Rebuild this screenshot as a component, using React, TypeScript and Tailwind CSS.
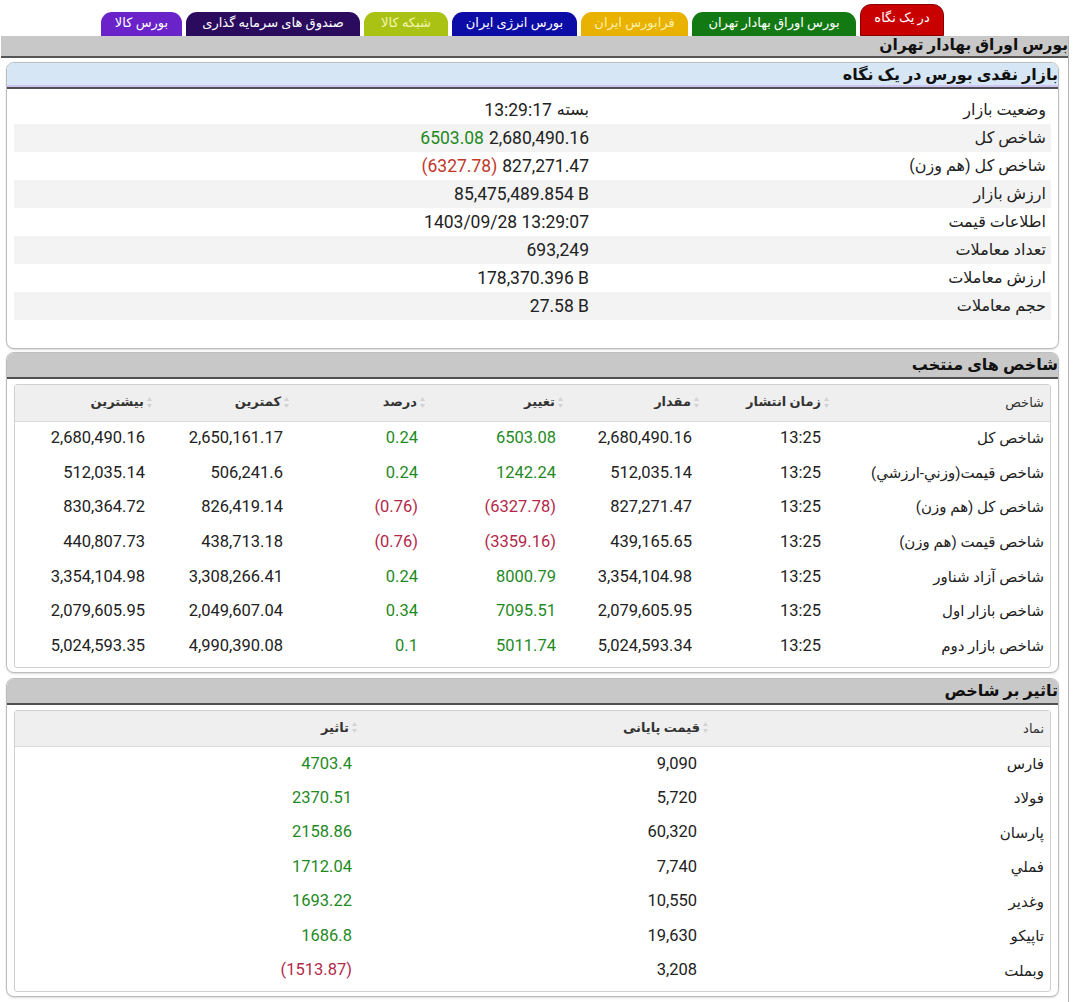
import React from "react";

const tabs = [
  { label: "در یک نگاه", cls: "bg-[#c80000] text-white h-[32px] w-[84px] pt-[5px] border border-[#8a0000]" },
  { label: "بورس اوراق بهادار تهران", cls: "bg-[#137a13] text-white h-[24px] w-[164px] pt-[3px]" },
  { label: "فرابورس ایران", cls: "bg-[#e9b200] text-[#fff1a8] h-[24px] w-[107px] pt-[3px]" },
  { label: "بورس انرژی ایران", cls: "bg-[#0c0ca6] text-white h-[24px] w-[125px] pt-[3px]" },
  { label: "شبکه کالا", cls: "bg-[#a9c213] text-[#f3f6b0] h-[24px] w-[84px] pt-[3px]" },
  { label: "صندوق های سرمایه گذاری", cls: "bg-[#2b0b5e] text-white h-[24px] w-[174px] pt-[3px]" },
  { label: "بورس کالا", cls: "bg-[#6a22c9] text-white h-[24px] w-[81px] pt-[3px]" },
];

type Tone = "pos" | "neg" | "none";

const toneCls = (t: Tone) =>
  t === "pos" ? "text-[#1f8a1f]" : t === "neg" ? "text-[#b3284a]" : "text-[#222]";

const selected: { name: string; cells: string[]; tone: Tone }[] = [
  { name: "شاخص کل", cells: ["13:25", "2,680,490.16", "6503.08", "0.24", "2,650,161.17", "2,680,490.16"], tone: "pos" },
  { name: "شاخص قیمت(وزني-ارزشي)", cells: ["13:25", "512,035.14", "1242.24", "0.24", "506,241.6", "512,035.14"], tone: "pos" },
  { name: "شاخص کل (هم وزن)", cells: ["13:25", "827,271.47", "(6327.78)", "(0.76)", "826,419.14", "830,364.72"], tone: "neg" },
  { name: "شاخص قیمت (هم وزن)", cells: ["13:25", "439,165.65", "(3359.16)", "(0.76)", "438,713.18", "440,807.73"], tone: "neg" },
  { name: "شاخص آزاد شناور", cells: ["13:25", "3,354,104.98", "8000.79", "0.24", "3,308,266.41", "3,354,104.98"], tone: "pos" },
  { name: "شاخص بازار اول", cells: ["13:25", "2,079,605.95", "7095.51", "0.34", "2,049,607.04", "2,079,605.95"], tone: "pos" },
  { name: "شاخص بازار دوم", cells: ["13:25", "5,024,593.34", "5011.74", "0.1", "4,990,390.08", "5,024,593.35"], tone: "pos" },
];

const impact: { name: string; price: string; value: string; tone: Tone }[] = [
  { name: "فارس", price: "9,090", value: "4703.4", tone: "pos" },
  { name: "فولاد", price: "5,720", value: "2370.51", tone: "pos" },
  { name: "پارسان", price: "60,320", value: "2158.86", tone: "pos" },
  { name: "فملي", price: "7,740", value: "1712.04", tone: "pos" },
  { name: "وغدیر", price: "10,550", value: "1693.22", tone: "pos" },
  { name: "تاپیکو", price: "19,630", value: "1686.8", tone: "pos" },
  { name: "وبملت", price: "3,208", value: "(1513.87)", tone: "neg" },
];

function SortIcon() {
  return (
    <svg width="5" height="11" viewBox="0 0 5 11" className="shrink-0">
      <path d="M2.5 0 L5 4 L0 4 Z" fill="#d2d2d2" />
      <path d="M2.5 11 L5 7 L0 7 Z" fill="#d2d2d2" />
    </svg>
  );
}

function Num({ children, className = "" }: { children: React.ReactNode; className?: string }) {
  return (
    <span dir="ltr" className={`font-['Roboto'] ${className}`}>
      {children}
    </span>
  );
}

function Panel({ title, blue, children }: { title: string; blue?: boolean; children: React.ReactNode }) {
  return (
    <div className="ml-[6px] mr-[9px] rounded-lg border border-[#bdbdbd] bg-white overflow-hidden shadow-[0_1px_2px_rgba(0,0,0,0.15)]">
      {blue ? (
        <div className="h-[26px] bg-[#d6e6f4] border-b-2 border-[#4f4f55] shadow-[inset_0_-2px_0_#cdc4f2] flex items-center pl-[3px]">
          <span className="font-bold text-[16px] text-[#111]">{title}</span>
        </div>
      ) : (
        <div className="h-[26px] bg-[#c8c8c8] border-b-2 border-[#505050] flex items-center pl-[3px]">
          <span className="font-bold text-[16px] text-[#111]">{title}</span>
        </div>
      )}
      {children}
    </div>
  );
}

export default function App() {
  const overview: { label: string; value: React.ReactNode }[] = [
    { label: "وضعیت بازار", value: <><span className="text-[16px]">بسته</span><Num>13:29:17</Num></> },
    { label: "شاخص کل", value: <><Num>2,680,490.16</Num><Num className="text-[#1f8a1f]">6503.08</Num></> },
    { label: "شاخص کل (هم وزن)", value: <><Num>827,271.47</Num><Num className="text-[#c0392b]">(6327.78)</Num></> },
    { label: "ارزش بازار", value: <Num>85,475,489.854 B</Num> },
    { label: "اطلاعات قیمت", value: <Num>1403/09/28 13:29:07</Num> },
    { label: "تعداد معاملات", value: <Num>693,249</Num> },
    { label: "ارزش معاملات", value: <Num>178,370.396 B</Num> },
    { label: "حجم معاملات", value: <Num>27.58 B</Num> },
  ];

  const selHeads = ["زمان انتشار", "مقدار", "تغییر", "درصد", "کمترین", "بیشترین"];

  return (
    <div dir="rtl" className="w-[1079px] min-h-[1002px] bg-white text-[#222] font-['Roboto','DejaVu_Sans',sans-serif]">
      {/* tabs */}
      <div className="h-[36px] flex items-end gap-[4px] pr-[135px]">
        {tabs.map((t) => (
          <div key={t.label} className={`rounded-t-[11px] text-center text-[13px] leading-[16px] ${t.cls}`}>
            {t.label}
          </div>
        ))}
      </div>

      <div className="w-[1069px] mr-auto border-r border-[#b5b5b5] pb-[5px]">
        <div className="h-[22px] bg-[#c8c8c8] border-b-2 border-[#555] flex items-center pl-[3px] ml-[1px]">
          <span className="font-bold text-[15.5px] text-[#111]">بورس اوراق بهادار تهران</span>
        </div>

        <div className="h-[4px]" />

        {/* overview */}
        <Panel title="بازار نقدی بورس در یک نگاه" blue>
          <div className="px-[7px] pt-[7px] pb-[28px]">
            {overview.map((r, i) => (
              <div
                key={r.label}
                className={`grid grid-cols-[455px_1fr] h-[28px] items-center ${i % 2 === 1 ? "bg-[#f3f3f3]" : ""}`}
              >
                <div className="pr-[5px] text-[16px]">{r.label}</div>
                <div className="pr-[7px] text-[17.5px] flex items-center gap-[5px]">{r.value}</div>
              </div>
            ))}
          </div>
        </Panel>

        <div className="h-[3px]" />

        {/* selected indices */}
        <Panel title="شاخص های منتخب">
          <div className="px-[7px] pt-[5px] pb-[4px]">
            <div className="border border-[#d0d0d0] rounded-[3px] pb-[3px]">
              <table className="w-full table-fixed border-collapse">
                <colgroup>
                  <col className="w-[218px]" />
                  <col className="w-[130px]" />
                  <col className="w-[136px]" />
                  <col className="w-[138px]" />
                  <col className="w-[136px]" />
                  <col className="w-[137px]" />
                  <col />
                </colgroup>
                <thead>
                  <tr className="h-[36px] bg-[#efefef] border-b border-[#dcdcdc]">
                    <th className="text-right pr-[6px] text-[13px] font-normal text-[#333]">شاخص</th>
                    {selHeads.map((h) => (
                      <th key={h} className="text-right pr-[3px] text-[13px] font-bold text-[#333]">
                        <span className="inline-flex items-center gap-[3px]">
                          <SortIcon />
                          {h}
                        </span>
                      </th>
                    ))}
                  </tr>
                </thead>
                <tbody>
                  {selected.map((r) => (
                    <tr key={r.name} className="h-[34.67px]">
                      <td className="text-right pr-[6px] text-[15px]">{r.name}</td>
                      <td className="text-right pr-[11px] text-[16.5px]"><Num>{r.cells[0]}</Num></td>
                      <td className="text-right pr-[10px] text-[16.5px]"><Num>{r.cells[1]}</Num></td>
                      <td className="text-right pr-[10px] text-[16.5px]"><Num className={toneCls(r.tone)}>{r.cells[2]}</Num></td>
                      <td className="text-right pr-[10px] text-[16.5px]"><Num className={toneCls(r.tone)}>{r.cells[3]}</Num></td>
                      <td className="text-right pr-[9px] text-[16.5px]"><Num>{r.cells[4]}</Num></td>
                      <td className="text-right pr-[10px] text-[16.5px]"><Num>{r.cells[5]}</Num></td>
                    </tr>
                  ))}
                </tbody>
              </table>
            </div>
          </div>
        </Panel>

        <div className="h-[5px]" />

        {/* impact */}
        <Panel title="تاثیر بر شاخص">
          <div className="px-[7px] pt-[5px] pb-[4px]">
            <div className="border border-[#d0d0d0] rounded-[3px] pb-[3px]">
              <table className="w-full table-fixed border-collapse">
                <colgroup>
                  <col className="w-[338px]" />
                  <col className="w-[354px]" />
                  <col />
                </colgroup>
                <thead>
                  <tr className="h-[36px] bg-[#efefef] border-b border-[#dcdcdc]">
                    <th className="text-right pr-[6px] text-[13px] font-normal text-[#333]">نماد</th>
                    <th className="text-right pr-[4px] text-[13px] font-bold text-[#333]">
                      <span className="inline-flex items-center gap-[3px]">
                        <SortIcon />
                        قیمت پایانی
                      </span>
                    </th>
                    <th className="text-right pr-[1px] text-[13px] font-bold text-[#333]">
                      <span className="inline-flex items-center gap-[3px]">
                        <SortIcon />
                        تاثیر
                      </span>
                    </th>
                  </tr>
                </thead>
                <tbody>
                  {impact.map((r) => (
                    <tr key={r.name} className="h-[34.5px]">
                      <td className="text-right pr-[6px] text-[15px]">{r.name}</td>
                      <td className="text-right pr-[15px] text-[16.5px]"><Num>{r.price}</Num></td>
                      <td className="text-right pr-[6px] text-[16.5px]"><Num className={toneCls(r.tone)}>{r.value}</Num></td>
                    </tr>
                  ))}
                </tbody>
              </table>
            </div>
          </div>
        </Panel>
      </div>
    </div>
  );
}
